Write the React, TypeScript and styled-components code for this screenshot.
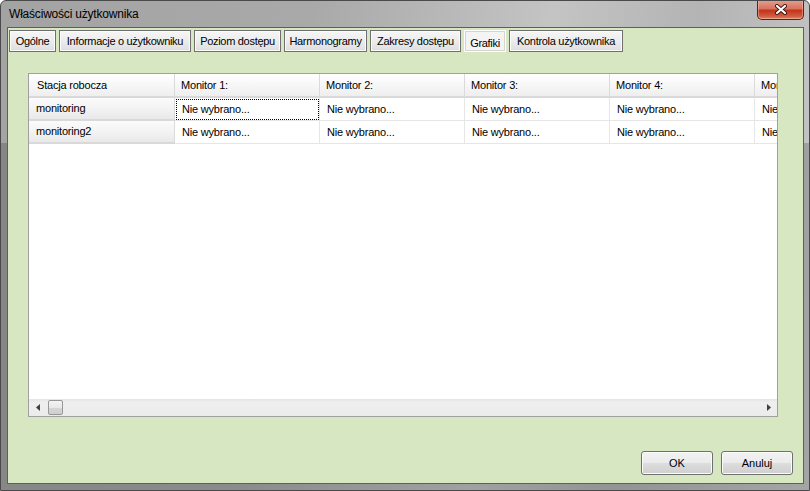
import React from "react";
import styled, { createGlobalStyle } from "styled-components";

const GlobalStyle = createGlobalStyle`
  html, body {
    margin: 0;
    padding: 0;
    background: #ffffff;
  }
  body {
    font-family: "Liberation Sans", Arial, sans-serif;
    font-size: 11px;
    color: #000;
  }
`;

const tabs = [
  { label: "Ogólne", width: 47 },
  { label: "Informacje o użytkowniku", width: 132 },
  { label: "Poziom dostępu", width: 87 },
  { label: "Harmonogramy", width: 83 },
  { label: "Zakresy dostępu", width: 91 },
  { label: "Grafiki", width: 42, active: true },
  { label: "Kontrola użytkownika", width: 114 },
];

const stations = ["monitoring", "monitoring2"];
const monitors = ["Monitor 1:", "Monitor 2:", "Monitor 3:", "Monitor 4:", "Monitor 5:"];

const WindowFrame = styled.div`
  width: 810px;
  height: 491px;
  box-sizing: border-box;
  border: 1px solid #4a4a4a;
  border-radius: 6px 6px 0 0;
  display: flex;
  flex-direction: column;
  overflow: hidden;
  background: linear-gradient(to bottom, transparent 0, transparent 142px, rgba(0, 0, 0, 0.18) 142px),
    linear-gradient(100deg, #a3a3a3 0%, #a9a9a9 35%, #c4c4c4 62%, #b4b4b4 78%, #c9c9c9 100%);
`;

const TitleBar = styled.div`
  height: 26px;
  display: flex;
  justify-content: space-between;
  align-items: flex-start;
  padding: 0 5px 0 8px;
`;

const Title = styled.div`
  font-size: 12px;
  letter-spacing: -0.2px;
  line-height: 26px;
`;

const CloseButton = styled.div`
  margin-top: -1px;
  width: 47px;
  height: 20px;
  box-sizing: border-box;
  border: 1px solid #5a2219;
  border-top: none;
  border-radius: 0 0 5px 5px;
  display: flex;
  align-items: center;
  justify-content: center;
  background: linear-gradient(to bottom, #e6a091 0%, #d7735e 45%, #c2351a 55%, #cf5b40 85%, #e08a6e 100%);
  box-shadow: inset 0 0 0 1px rgba(255, 200, 190, 0.45);
`;

const ClientArea = styled.div`
  flex: 1;
  margin: 0 5px 6px 6px;
  border: 1px solid #5e5e5e;
  background: #d6e7c1;
  display: flex;
  flex-direction: column;
  min-height: 0;
`;

const TabRow = styled.div`
  display: flex;
  gap: 3px;
  padding: 2px 0 0 1px;
`;

const Tab = styled.div<{ $width: number; $active?: boolean }>`
  flex-shrink: 0;
  width: ${(p) => p.$width}px;
  height: 22px;
  box-sizing: border-box;
  display: flex;
  align-items: center;
  justify-content: center;
  overflow: hidden;
  letter-spacing: -0.3px;
  white-space: nowrap;
  border: 1px solid ${(p) => (p.$active ? "#ffffff" : "#6f6f6f")};
  background: ${(p) =>
    p.$active ? "#f4f4f4" : "linear-gradient(to bottom, #f6f6f6 0%, #ececec 50%, #dedede 100%)"};
  box-shadow: ${(p) => (p.$active ? "inset 0 0 0 1px #d4d4d4" : "inset 0 0 0 1px #fbfbfb")};
  padding-top: ${(p) => (p.$active ? "3px" : "0")};
`;

const GridBox = styled.div`
  margin: 21px 25px 0 20px;
  height: 344px;
  box-sizing: border-box;
  border: 1px solid #a0a0a0;
  background: #ffffff;
  display: flex;
  flex-direction: column;
`;

const GridBody = styled.div`
  flex: 1;
  overflow: hidden;
`;

const GridRow = styled.div`
  display: flex;
`;

const GridCell = styled.div<{ $width?: number; $kind: "head" | "side" | "data"; $focus?: boolean; $pad?: number }>`
  flex-shrink: 0;
  width: ${(p) => p.$width ?? 145}px;
  height: ${(p) => (p.$kind === "head" ? 24 : 23)}px;
  box-sizing: border-box;
  display: flex;
  align-items: center;
  padding-left: ${(p) => p.$pad ?? (p.$kind === "data" ? 7 : 6)}px;
  padding-bottom: 1px;
  white-space: nowrap;
  overflow: hidden;
  letter-spacing: -0.2px;
  border-right: 1px solid ${(p) => (p.$kind === "data" ? "#e6e6e6" : "#dadada")};
  border-bottom: ${(p) => (p.$kind === "data" ? "1px solid #e6e6e6" : "2px solid #d9d9d9")};
  background: ${(p) =>
    p.$kind === "head"
      ? "linear-gradient(to bottom, #ffffff 0%, #f7f7f7 50%, #eeeeee 100%)"
      : p.$kind === "side"
      ? "linear-gradient(to bottom, #fbfbfb 0%, #f3f3f3 50%, #e9e9e9 100%)"
      : "#ffffff"};
  outline: ${(p) => (p.$focus ? "1px dotted #000" : "none")};
  outline-offset: -2px;
`;

const ScrollBar = styled.div`
  height: 17px;
  flex-shrink: 0;
  display: flex;
  align-items: center;
  background: linear-gradient(to bottom, #e4e4e4 0%, #efefef 20%, #ebebeb 100%);
`;

const ScrollArrow = styled.div`
  width: 17px;
  height: 17px;
  display: flex;
  align-items: center;
  justify-content: center;
`;

const ScrollThumb = styled.div`
  width: 15px;
  height: 15px;
  margin-left: 2px;
  box-sizing: border-box;
  border: 1px solid #979797;
  border-radius: 2px;
  background: linear-gradient(to bottom, #f4f4f4 0%, #e9e9e9 50%, #d6d6d6 51%, #cfcfcf 100%);
`;

const Spacer = styled.div`
  flex: 1;
`;

const Footer = styled.div`
  margin-top: auto;
  display: flex;
  justify-content: flex-end;
  gap: 8px;
  padding: 0 10px 8px 0;
`;

const DialogButton = styled.div`
  width: 72px;
  height: 24px;
  box-sizing: border-box;
  border: 1px solid #707070;
  border-radius: 3px;
  display: flex;
  align-items: center;
  justify-content: center;
  background: linear-gradient(to bottom, #f2f2f2 0%, #ebebeb 50%, #dddddd 51%, #cfcfcf 100%);
  box-shadow: inset 0 0 0 1px #fbfbfb;
`;

export default function App() {
  return (
    <>
      <GlobalStyle />
      <WindowFrame>
        <TitleBar>
          <Title>Właściwości użytkownika</Title>
          <CloseButton>
            <svg width="14" height="11" viewBox="0 0 14 11">
              <path d="M3 2 L11 9 M11 2 L3 9" stroke="#3a1410" strokeWidth="4" strokeLinecap="round" />
              <path d="M3 2 L11 9 M11 2 L3 9" stroke="#ffffff" strokeWidth="2.2" strokeLinecap="round" />
            </svg>
          </CloseButton>
        </TitleBar>
        <ClientArea>
          <TabRow>
            {tabs.map((t) => (
              <Tab key={t.label} $width={t.width} $active={t.active}>
                {t.label}
              </Tab>
            ))}
          </TabRow>
          <GridBox>
            <GridBody>
              <GridRow>
                <GridCell $kind="head" $width={146} $pad={8}>
                  Stacja robocza
                </GridCell>
                {monitors.map((m) => (
                  <GridCell key={m} $kind="head">
                    {m}
                  </GridCell>
                ))}
              </GridRow>
              {stations.map((s, r) => (
                <GridRow key={s}>
                  <GridCell $kind="side" $width={146} $pad={7}>
                    {s}
                  </GridCell>
                  {monitors.map((m, c) => (
                    <GridCell key={m} $kind="data" $focus={r === 0 && c === 0}>
                      Nie wybrano...
                    </GridCell>
                  ))}
                </GridRow>
              ))}
            </GridBody>
            <ScrollBar>
              <ScrollArrow>
                <svg width="4" height="7" viewBox="0 0 4 7">
                  <path d="M4 0 L0 3.5 L4 7 Z" fill="#404040" />
                </svg>
              </ScrollArrow>
              <ScrollThumb />
              <Spacer />
              <ScrollArrow>
                <svg width="4" height="7" viewBox="0 0 4 7">
                  <path d="M0 0 L4 3.5 L0 7 Z" fill="#404040" />
                </svg>
              </ScrollArrow>
            </ScrollBar>
          </GridBox>
          <Footer>
            <DialogButton>OK</DialogButton>
            <DialogButton>Anuluj</DialogButton>
          </Footer>
        </ClientArea>
      </WindowFrame>
    </>
  );
}
